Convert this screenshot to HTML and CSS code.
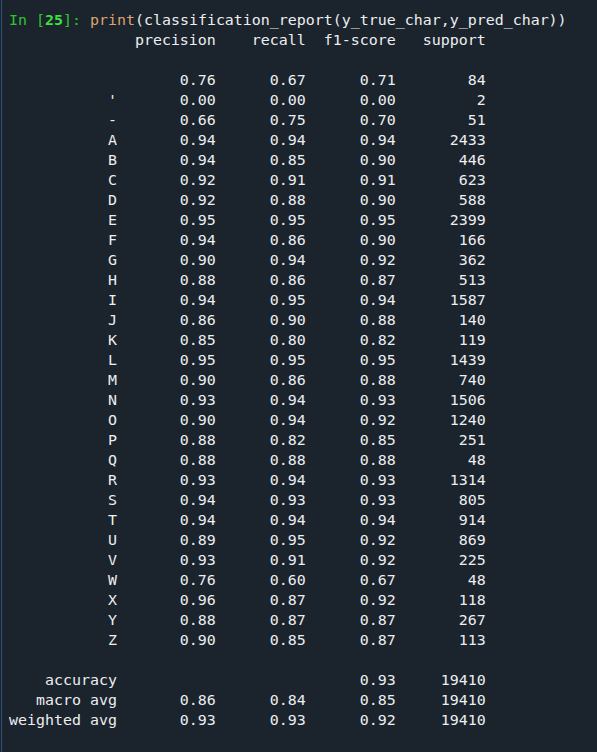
FILE: index.html
```html
<!DOCTYPE html>
<html>
<head>
<meta charset="utf-8">
<link rel="stylesheet" href="styles.css">
</head>
<body>
<div class="console">
<pre class="input"><span class="prompt">In [<b class="num">25</b>]: </span><span class="builtin">print</span>(classification_report(y_true_char,y_pred_char))</pre>
<pre class="output">              precision    recall  f1-score   support

                   0.76      0.67      0.71        84
           '       0.00      0.00      0.00         2
           -       0.66      0.75      0.70        51
           A       0.94      0.94      0.94      2433
           B       0.94      0.85      0.90       446
           C       0.92      0.91      0.91       623
           D       0.92      0.88      0.90       588
           E       0.95      0.95      0.95      2399
           F       0.94      0.86      0.90       166
           G       0.90      0.94      0.92       362
           H       0.88      0.86      0.87       513
           I       0.94      0.95      0.94      1587
           J       0.86      0.90      0.88       140
           K       0.85      0.80      0.82       119
           L       0.95      0.95      0.95      1439
           M       0.90      0.86      0.88       740
           N       0.93      0.94      0.93      1506
           O       0.90      0.94      0.92      1240
           P       0.88      0.82      0.85       251
           Q       0.88      0.88      0.88        48
           R       0.93      0.94      0.93      1314
           S       0.94      0.93      0.93       805
           T       0.94      0.94      0.94       914
           U       0.89      0.95      0.92       869
           V       0.93      0.91      0.92       225
           W       0.76      0.60      0.67        48
           X       0.96      0.87      0.92       118
           Y       0.88      0.87      0.87       267
           Z       0.90      0.85      0.87       113

    accuracy                           0.93     19410
   macro avg       0.86      0.84      0.85     19410
weighted avg       0.93      0.93      0.92     19410
</pre>
</div>
</body>
</html>
```

FILE: styles.css
```css
html, body {
  margin: 0;
  padding: 0;
  background: #1b232d;
  height: 100%;
}

.console {
  box-sizing: border-box;
  min-height: 752px;
  margin-left: 1px;
  border-left: 1px solid #2e5176;
  padding: 10px 0 0 7px;
  background: #1b232d;
}

pre {
  margin: 0;
  font-family: "DejaVu Sans Mono", "Liberation Mono", monospace;
  font-size: 14.95px;
  line-height: 20px;
  color: #eceef0;
  white-space: pre;
}

.prompt {
  color: #2fc42f;
}

.num {
  color: #3fe03f;
  font-weight: bold;
}

.builtin {
  color: #dba46e;
}
```
